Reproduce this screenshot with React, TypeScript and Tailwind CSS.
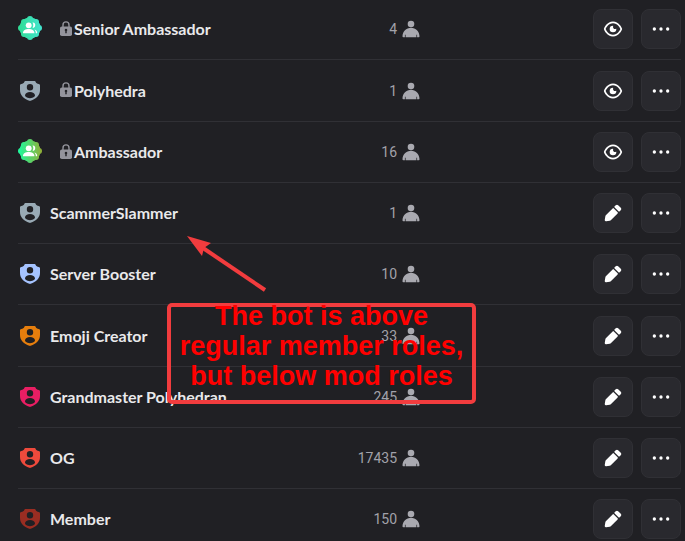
interface Role {
  name: string
  members: number
  color: string
  colorEnd?: string
  locked?: boolean
}

const roles: Role[] = [
  { name: "Senior Ambassador", members: 4, color: "#2fdc93", colorEnd: "#43e5d0", locked: true },
  { name: "Polyhedra", members: 1, color: "#99aab5", locked: true },
  { name: "Ambassador", members: 16, color: "#1cfba0", colorEnd: "#93ad35", locked: true },
  { name: "ScammerSlammer", members: 1, color: "#99aab5" },
  { name: "Server Booster", members: 10, color: "#a5c3ff" },
  { name: "Emoji Creator", members: 33, color: "#e67e0d" },
  { name: "Grandmaster Polyhedran", members: 245, color: "#e91e63" },
  { name: "OG", members: 17435, color: "#ee4a3c" },
  { name: "Member", members: 150, color: "#992d22" },
]

const ShieldIcon = ({ color }: { color: string }) => (
  <svg viewBox="0 0 20 20" className="size-5" fill={color} aria-hidden="true">
    <path
      fillRule="evenodd"
      d="M5.300 0h9.400c.5 0 .7.300.9.700.5 1.300 1.600 2.100 3.100 2.200.9.100 1.300.5 1.300 1.300V9c0 5.300-4 9-9.300 10.800-.5.200-.9.200-1.400 0C4 18 0 14.300 0 9V4.200c0-.8.4-1.200 1.300-1.300 1.500-.1 2.600-.9 3.100-2.200.2-.4.4-.7.9-.7ZM10 3a3.200 3.200 0 1 0 0 6.400A3.200 3.200 0 0 0 10 3Zm0 8c-2.700 0-5 1.500-5 3.500 0 .5.2.8.5 1.100 2.500 2.100 6.500 2.100 9 0 .3-.3.5-.6.5-1.100 0-2-2.300-3.500-5-3.500Z"
    />
  </svg>
)

const BadgeIcon = ({ id, from, to }: { id: string; from: string; to: string }) => (
  <svg viewBox="0 0 24 24" className="mb-0.5 size-6" aria-hidden="true">
    <defs>
      <linearGradient id={id} gradientUnits="userSpaceOnUse" x1="0" y1="12" x2="24" y2="12">
        <stop offset="0" stopColor={from} />
        <stop offset="1" stopColor={to} />
      </linearGradient>
    </defs>
    <g fill={`url(#${id})`}>
      <circle cx="12" cy="12" r="10.600" />
      <circle cx="12" cy="3" r="3" />
      <circle cx="18" cy="6" r="3" />
      <circle cx="21" cy="12" r="3" />
      <circle cx="18" cy="18" r="3" />
      <circle cx="12" cy="21" r="3" />
      <circle cx="6" cy="18" r="3" />
      <circle cx="3" cy="12" r="3" />
      <circle cx="6" cy="6" r="3" />
    </g>
    <g fill="#fff">
      <circle cx="10.700" cy="9.300" r="2.900" />
      <path d="M5 16.700c0-2.300 2.600-3.700 5.700-3.700s5.700 1.400 5.700 3.700v.3c0 .2-.2.300-.4.300H5.400c-.2 0-.4-.1-.4-.3v-.3ZM14.500 6.600c2.300-.2 2.900 1.500 2.700 2.900-.1 1.400-1.100 2.400-2.600 2.500 1-1.700 1-3.700-.1-5.400ZM16.300 13.500c2 .5 2.900 1.600 2.900 3.300 0 .3-.2.500-.5.500h-.9c.1-1.500-.4-2.800-1.500-3.800Z" />
    </g>
  </svg>
)

const LockIcon = () => (
  <svg viewBox="0 0 12 15" className="mb-0.5 h-[15px] w-3 shrink-0" aria-hidden="true">
    <path d="M3 7V3.900a3 3 0 0 1 6 0V7" fill="none" stroke="#94949c" strokeWidth="1.400" />
    <rect y="5.500" width="12" height="9.500" rx="1.800" fill="#94949c" />
    <path d="M6 7.700a1.300 1.300 0 0 0-.7 2.400v2.200h1.400v-2.200A1.300 1.300 0 0 0 6 7.700Z" fill="#202024" />
  </svg>
)

const MemberIcon = () => (
  <svg viewBox="0 0 18 18" className="size-[18px] shrink-0" fill="#a9a9b0" aria-hidden="true">
    <circle cx="9" cy="4" r="3.300" />
    <path d="M9 7.800c4.700 0 8.500 3.800 8.500 8.700 0 .5-.3.800-.8.800h-1.600v-2.600h-.7v2.600H3.600v-2.600h-.7v2.600H1.300c-.5 0-.8-.3-.8-.8 0-4.900 3.800-8.700 8.500-8.700Z" />
  </svg>
)

const EyeIcon = () => (
  <svg viewBox="0 0 24 24" className="size-5" fill="#fff" aria-hidden="true">
    <path d="M15.560 11.770c.2-.1.440.02.440.230a4 4 0 1 1-4-4c.210 0 .330.250.230.440a2.500 2.500 0 0 0 3.320 3.320Z" />
    <path
      fillRule="evenodd"
      d="M22.890 11.700c.07.2.07.4 0 .6C22.270 13.900 19.100 21 12 21c-7.110 0-10.270-7.110-10.890-8.700a.83.83 0 0 1 0-.6C1.730 10.100 4.900 3 12 3c7.110 0 10.270 7.110 10.890 8.700Zm-4.500-3.620A15.110 15.110 0 0 1 20.850 12c-.38.880-1.180 2.470-2.460 3.920C16.870 17.620 14.800 19 12 19c-2.800 0-4.870-1.380-6.390-3.080A15.110 15.110 0 0 1 3.150 12c.38-.88 1.180-2.470 2.460-3.920C7.130 6.380 9.200 5 12 5c2.800 0 4.870 1.380 6.390 3.080Z"
    />
  </svg>
)

const PencilIcon = () => (
  <svg viewBox="0 0 24 24" className="size-5" fill="#fff" aria-hidden="true">
    <path d="m13.960 5.460 4.580 4.580a1 1 0 0 0 1.420 0l1.380-1.380a2 2 0 0 0 0-2.820l-3.180-3.180a2 2 0 0 0-2.820 0l-1.380 1.380a1 1 0 0 0 0 1.420ZM2.110 20.160l.73-4.220a3 3 0 0 1 .83-1.610l7.870-7.870a1 1 0 0 1 1.420 0l4.580 4.580a1 1 0 0 1 0 1.420l-7.870 7.870a3 3 0 0 1-1.600.83l-4.230.73a1.500 1.500 0 0 1-1.730-1.730Z" />
  </svg>
)

const DotsIcon = () => (
  <svg viewBox="0 0 24 24" className="size-5" fill="#fff" aria-hidden="true">
    <circle cx="4" cy="12" r="2" />
    <circle cx="12" cy="12" r="2" />
    <circle cx="20" cy="12" r="2" />
  </svg>
)

const buttonStyle =
  "flex size-10 cursor-pointer items-center justify-center rounded-lg border border-[#303035] bg-[#29292e]"

const RoleRow = ({ role, idx }: { role: Role; idx: number }) => (
  <li className="flex h-[61px] items-center border-b border-[#303035] nth-[4n+2]:h-[62px]">
    <div className="flex w-[54%] min-w-0 shrink-0 items-center">
      <div className="flex w-6 shrink-0 justify-center">
        {role.colorEnd ? (
          <BadgeIcon id={`badge-${idx}`} from={role.color} to={role.colorEnd} />
        ) : (
          <ShieldIcon color={role.color} />
        )}
      </div>
      <div className={`flex items-center gap-0.5 ${role.locked ? "ml-[18px]" : "ml-2"}`}>
        {role.locked && <LockIcon />}
        <span className="font-['Lato',sans-serif] text-base font-bold whitespace-nowrap text-[#e9e9eb]">
          {role.name}
        </span>
      </div>
    </div>

    <div className="-ml-16 flex w-[108px] shrink-0 items-center justify-end gap-[5px]">
      <span className="text-sm text-[#a2a2aa]">{role.members}</span>
      <MemberIcon />
    </div>

    <div className="ml-auto flex gap-2">
      <button className={buttonStyle} aria-label={`${role.locked ? "View" : "Edit"} ${role.name}`}>
        {role.locked ? <EyeIcon /> : <PencilIcon />}
      </button>
      <button className={buttonStyle} aria-label={`More options for ${role.name}`}>
        <DotsIcon />
      </button>
    </div>
  </li>
)

const Annotation = () => (
  <div className="pointer-events-none absolute top-[236px] left-[167px] w-[309px]">
    <svg viewBox="0 0 82 56" className="ml-5 h-14 w-[82px]" aria-hidden="true">
      <path d="M16 12 78 54" stroke="#f23c3e" strokeWidth="4" />
      <path d="M0 0 24 7 17 12 15 20Z" fill="#f23c3e" />
    </svg>
    <div className="mt-[11px] h-[101px] rounded-[5px] border-4 border-[#f23c3e]">
      <p className="-mt-[6px] text-center font-['Liberation_Sans',sans-serif] text-[27px] leading-[30px] font-bold whitespace-nowrap text-[#ff0000]">
        The bot is above
        <br />
        regular member roles,
        <br />
        but below mod roles
      </p>
    </div>
  </div>
)

export default function App() {
  return (
    <main className="relative h-screen overflow-hidden bg-[#202024] font-['Roboto',sans-serif]">
      <ul className="-mt-px pr-1 pl-[18px]">
        {roles.map((role, idx) => (
          <RoleRow key={role.name} role={role} idx={idx} />
        ))}
      </ul>
      <Annotation />
    </main>
  )
}
